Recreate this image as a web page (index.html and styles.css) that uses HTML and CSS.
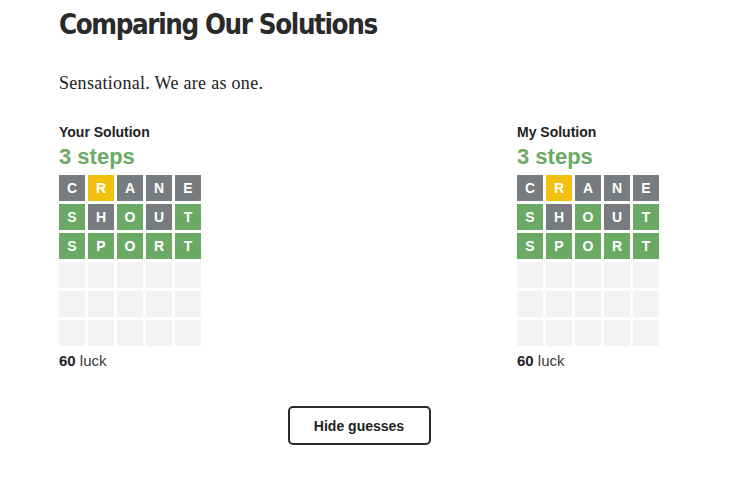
FILE: index.html
```html
<!DOCTYPE html>
<html>
<head>
<meta charset="utf-8">
<link rel="stylesheet" href="styles.css">
</head>
<body>
<div class="page">
  <h1 class="title">Comparing Our Solutions</h1>
  <p class="subtitle">Sensational. We are as one.</p>
  <div class="columns">
    <div class="col">
      <div class="label">Your Solution</div>
      <div class="steps">3 steps</div>
      <div class="board">
        <div class="tile g">C</div><div class="tile y">R</div><div class="tile g">A</div><div class="tile g">N</div><div class="tile g">E</div>
        <div class="tile c">S</div><div class="tile g">H</div><div class="tile c">O</div><div class="tile g">U</div><div class="tile c">T</div>
        <div class="tile c">S</div><div class="tile c">P</div><div class="tile c">O</div><div class="tile c">R</div><div class="tile c">T</div>
        <div class="tile e"></div><div class="tile e"></div><div class="tile e"></div><div class="tile e"></div><div class="tile e"></div>
        <div class="tile e"></div><div class="tile e"></div><div class="tile e"></div><div class="tile e"></div><div class="tile e"></div>
        <div class="tile e"></div><div class="tile e"></div><div class="tile e"></div><div class="tile e"></div><div class="tile e"></div>
      </div>
      <div class="luck"><b>60</b> luck</div>
    </div>
    <div class="col">
      <div class="label">My Solution</div>
      <div class="steps">3 steps</div>
      <div class="board">
        <div class="tile g">C</div><div class="tile y">R</div><div class="tile g">A</div><div class="tile g">N</div><div class="tile g">E</div>
        <div class="tile c">S</div><div class="tile g">H</div><div class="tile c">O</div><div class="tile g">U</div><div class="tile c">T</div>
        <div class="tile c">S</div><div class="tile c">P</div><div class="tile c">O</div><div class="tile c">R</div><div class="tile c">T</div>
        <div class="tile e"></div><div class="tile e"></div><div class="tile e"></div><div class="tile e"></div><div class="tile e"></div>
        <div class="tile e"></div><div class="tile e"></div><div class="tile e"></div><div class="tile e"></div><div class="tile e"></div>
        <div class="tile e"></div><div class="tile e"></div><div class="tile e"></div><div class="tile e"></div><div class="tile e"></div>
      </div>
      <div class="luck"><b>60</b> luck</div>
    </div>
  </div>
  <div class="actions">
    <button class="btn">Hide guesses</button>
  </div>
</div>
</body>
</html>
```
FILE: styles.css
```css
html, body {
  margin: 0;
  padding: 0;
  background: #ffffff;
}
.page {
  width: 600px;
  padding-left: 59px;
  color: #222;
  font-family: "Liberation Sans", Arial, sans-serif;
}
.title {
  margin: 0;
  padding-top: 6px;
  font-family: "DejaVu Sans", sans-serif;
  font-stretch: condensed;
  font-weight: 700;
  font-size: 27.5px;
  line-height: 36px;
  color: #2a2a2a;
  letter-spacing: -1.4px;
}
.subtitle {
  margin: 30px 0 0;
  font-family: "Liberation Serif", "Times New Roman", serif;
  font-size: 18px;
  line-height: 22px;
  letter-spacing: 0.3px;
  color: #222;
}
.columns {
  display: flex;
  justify-content: space-between;
  margin-top: 29px;
}
.col {
  width: 142px;
}
.label {
  font-weight: 700;
  font-size: 14px;
  line-height: 18px;
  color: #222;
}
.steps {
  font-weight: 700;
  font-size: 22px;
  line-height: 24px;
  color: #6aaa64;
  margin-top: 4px;
}
.board {
  display: grid;
  grid-template-columns: repeat(5, 26px);
  grid-auto-rows: 26px;
  gap: 3px;
  margin-top: 6px;
}
.tile {
  display: flex;
  align-items: center;
  justify-content: center;
  color: #fff;
  font-weight: 700;
  font-size: 14px;
}
.tile.g { background: #787c7e; }
.tile.y { background: #f2c10f; }
.tile.c { background: #6aaa64; }
.tile.e { background: #f3f3f3; }
.luck {
  margin-top: 6px;
  font-size: 15px;
  line-height: 18px;
  color: #3a3a3a;
}
.luck b {
  color: #222;
}
.actions {
  display: flex;
  justify-content: center;
  margin-top: 36px;
}
.btn {
  width: 143px;
  height: 39px;
  border: 2px solid #2a2a2a;
  border-radius: 5px;
  background: #fff;
  font-family: "Liberation Sans", Arial, sans-serif;
  font-weight: 700;
  font-size: 14px;
  color: #222;
}
```
